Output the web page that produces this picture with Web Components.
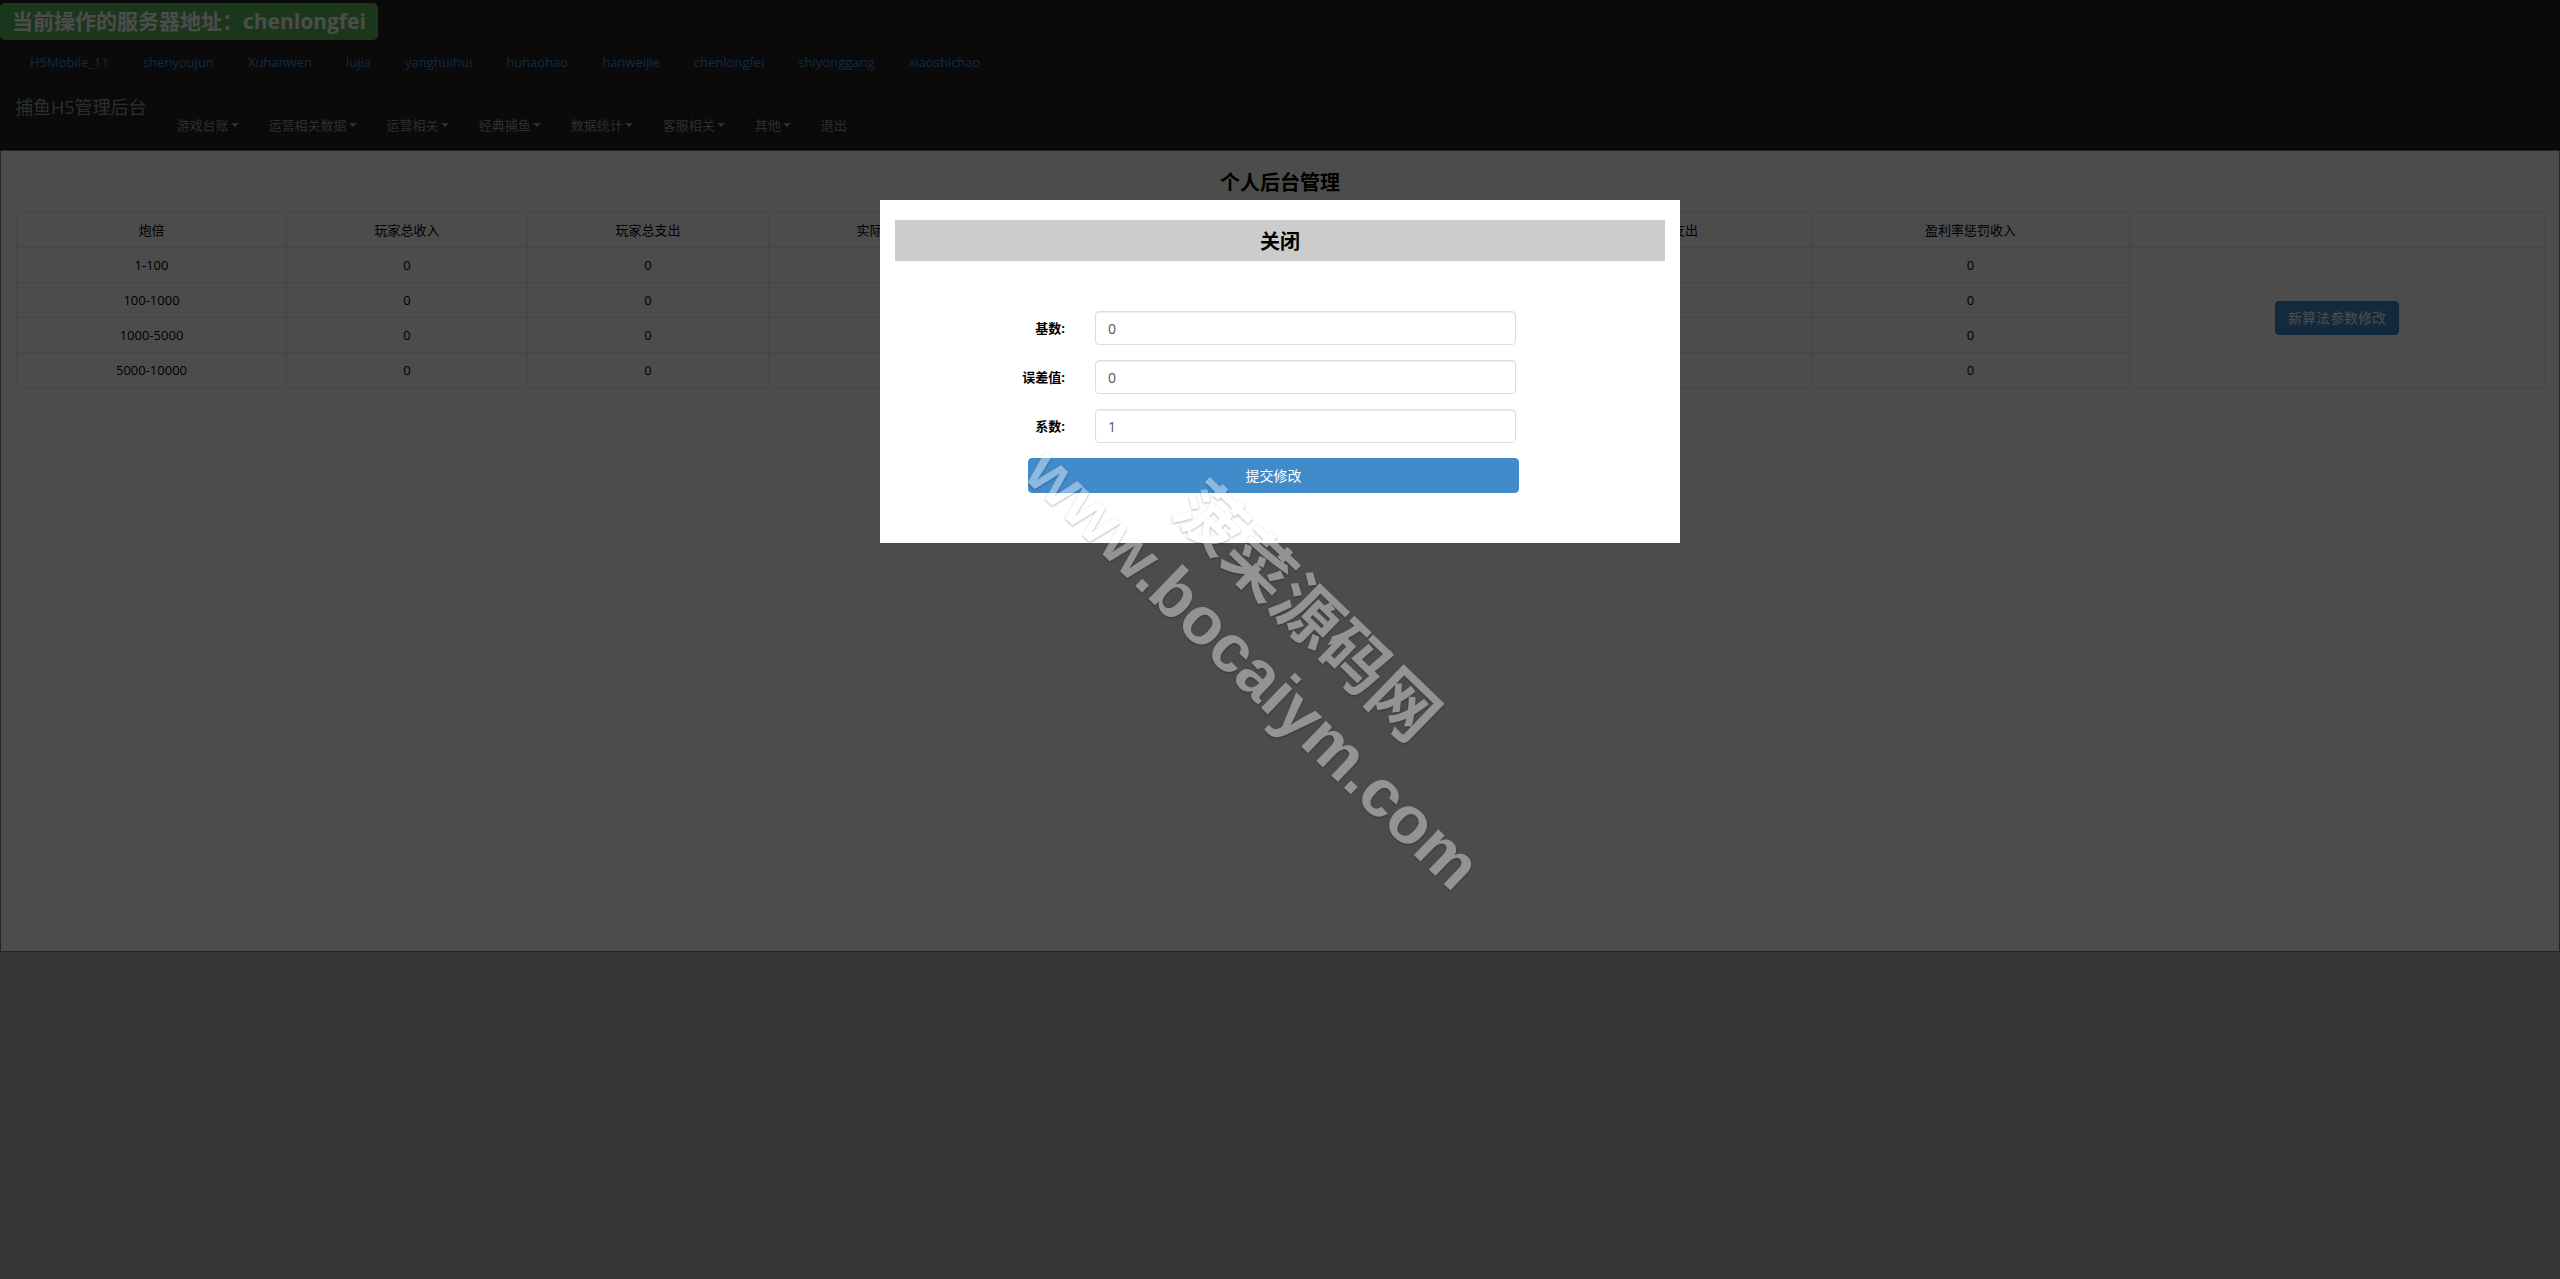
<!DOCTYPE html>
<html lang="zh-CN">
<head>
<meta charset="utf-8">
<title>捕鱼H5管理后台</title>
<style>
html, body { margin: 0; }
body { background: #b5b8bc; font: 13px/18px "Open Sans", "Noto Sans CJK SC", sans-serif; color: #000; }
</style>
</head>
<body>
<admin-header server="chenlongfei"></admin-header>
<admin-panel heading="个人后台管理"><profit-table></profit-table></admin-panel>
<modal-layer>
  <modal-dialog>
    <form-row label="基数:" value="0"></form-row>
    <form-row label="误差值:" value="0"></form-row>
    <form-row label="系数:" value="1"></form-row>
    <submit-button>提交修改</submit-button>
  </modal-dialog>
</modal-layer>
<water-mark><span>菠菜源码网</span><span>www.bocaiym.com</span></water-mark>
<script>
const define = (name, render) => customElements.define(name, class extends HTMLElement {
  connectedCallback() {
    if (!this.shadowRoot) this.attachShadow({ mode: "open" }).innerHTML = render(this);
  }
});

define("nav-item", el => `
<style>
:host { display: block; }
a { display: flex; align-items: center; gap: 2px; padding: 0 15px; color: #999; text-decoration: none; }
:host([link]) a { color: #428bca; }
i { border-top: 4px solid; border-left: 4px solid transparent; border-right: 4px solid transparent; }
</style>
<a href="#"><slot></slot>${el.hasAttribute("menu") ? "<i></i>" : ""}</a>`);

define("admin-header", el => {
  const servers = ["H5Mobile_11", "shenyoujun", "Xuhanwen", "lujia", "yanghuihui", "huhaohao", "hanweijie", "chenlongfei", "shiyonggang", "xiaoshichao"];
  const menus = ["游戏台账", "运营相关数据", "运营相关", "经典捕鱼", "数据统计", "客服相关", "其他"];
  return `
<style>
:host { display: block; background: #222; border-bottom: 1px solid #080808; padding: 3px 0 15px; }
.server { width: fit-content; background: #5cb85c; color: #fff; font-size: 21px; line-height: 29px; font-weight: 700; padding: 4px 12px; border-radius: 5px; }
nav { display: flex; }
.servers { padding: 13px 15px 0; gap: 4px; }
.main { display: flex; padding-top: 26px; }
.brand { font-size: 18px; line-height: 20px; padding: 0 15px; color: #999; text-decoration: none; }
.main nav { padding-top: 19px; }
</style>
<div class="server">当前操作的服务器地址：${el.getAttribute("server")}</div>
<nav class="servers">${servers.map(s => `<nav-item link>${s}</nav-item>`).join("")}</nav>
<div class="main"><a class="brand" href="#">捕鱼H5管理后台</a>
<nav>${menus.map(s => `<nav-item menu>${s}</nav-item>`).join("")}<nav-item>退出</nav-item></nav></div>`;
});

define("admin-panel", el => `
<style>
:host { display: block; box-sizing: border-box; min-height: 802px; background: #fff; border: 1px solid #7c7f8c; padding: 18px 15px; }
h1 { margin: 0 0 15px; font-size: 20px; line-height: 28px; text-align: center; }
</style>
<h1>${el.getAttribute("heading")}</h1><slot></slot>`);

define("profit-table", () => {
  const widths = [270, 241, 241, 241, 242, 242, 318, 318, 415];
  const heads = ["炮倍", "玩家总收入", "玩家总支出", "实际盈利率", "", "", "盈利率奖励支出", "盈利率惩罚收入", ""];
  const rows = ["1-100", "100-1000", "1000-5000", "5000-10000"];
  return `
<style>
:host { display: block; }
table { width: 100%; table-layout: fixed; border-collapse: collapse; }
th, td { border: 1px solid #e8e8e8; padding: 8px; font-weight: 400; text-align: center; height: 18px; }
button { font: 14px/20px "Open Sans", "Noto Sans CJK SC", sans-serif; color: #fff; background: #428bca; border: 1px solid #357ebd; border-radius: 4px; padding: 6px 12px; }
</style>
<table>
<colgroup>${widths.map(w => `<col style="width:${w}px">`).join("")}</colgroup>
<thead><tr>${heads.map(h => `<th>${h}</th>`).join("")}</tr></thead>
<tbody>${rows.map((r, i) => `<tr><td>${r}</td><td>0</td><td>0</td><td></td><td></td><td></td><td></td><td>0</td>${i ? "" : `<td rowspan="4"><button type="button">新算法参数修改</button></td>`}</tr>`).join("")}</tbody>
</table>`;
});

define("modal-layer", () => `
<style>
:host { position: fixed; inset: 0; background: rgba(0,0,0,.7); display: flex; justify-content: center; align-items: flex-start; padding-top: 200px; }
</style>
<slot></slot>`);

define("modal-dialog", () => `
<style>
:host { display: block; box-sizing: border-box; width: 800px; background: #fff; padding: 20px 15px 50px; }
.close { display: block; width: 100%; border: 0; background: #ccc; color: #000; font: 700 20px/29px "Open Sans", "Noto Sans CJK SC", sans-serif; padding: 7px 6px 5px; margin-bottom: 50px; }
form { display: flex; flex-direction: column; gap: 15px; }
</style>
<button class="close" type="button">关闭</button>
<form><slot></slot></form>`);

define("form-row", el => `
<style>
:host { display: grid; grid-template-columns: 170px 421px; column-gap: 30px; align-items: center; }
label { text-align: right; font-weight: 700; }
input { box-sizing: border-box; width: 100%; height: 34px; padding: 6px 12px; border: 1px solid #ddd; border-radius: 4px; box-shadow: inset 0 1px 1px rgba(0,0,0,.075); color: #555; background: #fff; font: 14px/20px "Open Sans", "Noto Sans CJK SC", sans-serif; }
</style>
<label for="field">${el.getAttribute("label")}</label><input id="field" type="text" value="${el.getAttribute("value")}">`);

define("submit-button", () => `
<style>
:host { display: block; margin-left: 133px; width: 491px; }
button { display: block; width: 100%; font: 14px/20px "Open Sans", "Noto Sans CJK SC", sans-serif; color: #fff; background: #428bca; border: 1px solid #428bca; border-radius: 4px; padding: 7px 12px 6px; }
</style>
<button type="submit"><slot></slot></button>`);

define("water-mark", () => `
<style>
:host { position: fixed; inset: 0; display: flex; justify-content: center; align-items: center; pointer-events: none; opacity: .4; filter: drop-shadow(0 1px 1px rgba(0,0,0,.7)); }
div { display: flex; flex-direction: column; align-items: center; transform: rotate(44deg); color: #fff; font: 700 67px/77px "Liberation Sans", "Noto Sans CJK SC", sans-serif; }
</style>
<div><slot></slot></div>`);
</script>
</body>
</html>
